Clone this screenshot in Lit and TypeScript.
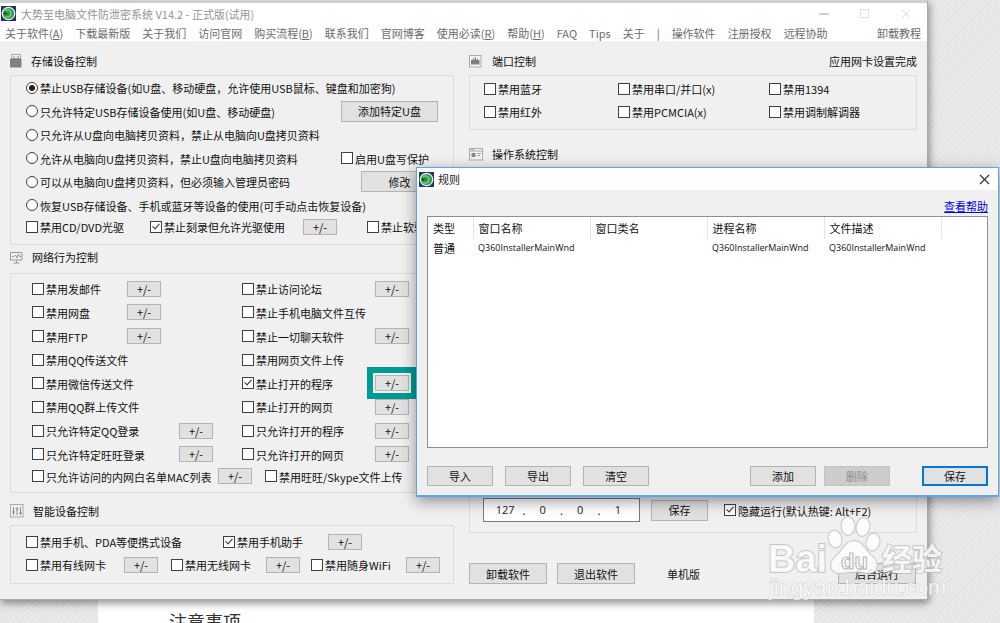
import { LitElement, html, css, svg, nothing } from "lit";
import { customElement, property } from "lit/decorators.js";

const controls = css`
  button {
    font: inherit;
    color: #111;
    background: #e1e1e1;
    border: 1px solid #b4b4b4;
    border-radius: 0;
    padding: 0;
    height: 21px;
    line-height: 16px;
    white-space: nowrap;
  }
  a {
    color: inherit;
    text-decoration: none;
  }
`;

@customElement("option-box")
class OptionBox extends LitElement {
  @property() label = "";
  @property() kind = "checkbox";
  @property() group = "";
  @property({ type: Boolean }) checked = false;

  static styles = css`
    :host {
      display: block;
      min-width: 0;
    }
    label {
      display: flex;
      align-items: center;
      gap: 2px;
      white-space: nowrap;
    }
    .mark {
      appearance: none;
      flex: none;
      box-sizing: border-box;
      position: relative;
      width: 12px;
      height: 12px;
      margin: 0;
      border: 1px solid #404040;
      background: #fff;
    }
    .mark[type="radio"] {
      border-radius: 50%;
    }
    .mark[type="radio"]:checked::after {
      content: "";
      position: absolute;
      inset: 2px;
      border-radius: 50%;
      background: #222;
    }
    .mark[type="checkbox"]:checked::after {
      content: "";
      position: absolute;
      left: 3px;
      top: 0;
      width: 3px;
      height: 6px;
      border: solid #333;
      border-width: 0 1px 1px 0;
      transform: rotate(42deg);
    }
    .text {
      padding-top: 1px;
    }
  `;

  render() {
    return html`<label>
      <input class="mark" type=${this.kind} name=${this.group || nothing} .checked=${this.checked} />
      <span class="text">${this.label}</span>
    </label>`;
  }
}

const logo = svg`
  <rect width="15" height="15" fill="#26346f"/>
  <circle cx="7.5" cy="7.5" r="6.2" fill="#2f9a4b" stroke="#e8f2ee" stroke-width="1.3"/>
  <path d="M4 4.500c3-1.500 6 0 6 3s-3 4.500-6 3" fill="none" stroke="#8fdc7c" stroke-width="1.200"/>
  <path d="M3 6.200l4 1.300-4 1.500z" fill="#173d3a"/>`;

interface Rule {
  type: string;
  windowName: string;
  windowClass: string;
  process: string;
  description: string;
}

@customElement("rules-dialog")
class RulesDialog extends LitElement {
  rules: Rule[] = [
    {
      type: "普通",
      windowName: "Q360InstallerMainWnd",
      windowClass: "",
      process: "Q360InstallerMainWnd",
      description: "Q360InstallerMainWnd",
    },
  ];

  static styles = [
    controls,
    css`
      :host {
        display: block;
        background: #f0f0f0;
        border: 1px solid #5ea6ea;
        border-bottom-width: 2px;
        box-shadow: 0 4px 14px rgba(0, 0, 0, 0.42);
      }
      .title {
        display: flex;
        align-items: center;
        gap: 4px;
        height: 22px;
        padding: 0 8px 0 2px;
        background: #fff;
        color: #222;
      }
      .title svg {
        flex: none;
      }
      .close {
        display: flex;
        margin-left: auto;
        height: auto;
        border: 0;
        background: none;
      }
      .body {
        padding: 8px 10px 9px;
      }
      .help {
        display: block;
        width: max-content;
        margin-left: auto;
        line-height: 16px;
        color: #0000f0;
        text-decoration: underline;
      }
      .list {
        margin-top: 2px;
        height: 230px;
        border: 1px solid #8b8f99;
        background: #fff;
      }
      table {
        width: 100%;
        table-layout: fixed;
        border-collapse: collapse;
      }
      th,
      td {
        padding: 0 0 0 5px;
        text-align: left;
        font-weight: normal;
        white-space: nowrap;
      }
      th {
        height: 22px;
        border-right: 1px solid #e4e4e4;
      }
      th:last-child {
        border-right: 0;
      }
      td {
        height: 17px;
      }
      .latin {
        font-family: "Open Sans", "Noto Sans CJK SC", sans-serif;
        font-size: 9px;
      }
      .kind {
        width: 45px;
      }
      .wide {
        width: 117px;
      }
      .actions {
        display: flex;
        gap: 12px;
        margin-top: 18px;
      }
      .actions button {
        width: 66px;
        height: 20px;
      }
      .push {
        margin-left: auto;
      }
      .actions button:disabled {
        margin-left: -4px;
        color: #8c8c8c;
        background: #cccccc;
        border-color: #c3c3c3;
      }
      .actions .primary {
        margin-left: 20px;
        border: 2px solid #0078d7;
      }
    `,
  ];

  render() {
    return html`
      <header class="title">
        <svg width="15" height="15" viewBox="0 0 15 15">${logo}</svg>
        <span>规则</span>
        <button class="close" aria-label="关闭">
          <svg width="11" height="11" viewBox="0 0 11 11">
            <path d="M1 1l9 9M10 1l-9 9" stroke="#333" stroke-width="1.200" />
          </svg>
        </button>
      </header>
      <div class="body">
        <a class="help" href="#help">查看帮助</a>
        <div class="list">
          <table>
            <colgroup>
              <col class="kind" />
              <col class="wide" />
              <col class="wide" />
              <col class="wide" />
              <col class="wide" />
              <col />
            </colgroup>
            <thead>
              <tr>
                <th>类型</th>
                <th>窗口名称</th>
                <th>窗口类名</th>
                <th>进程名称</th>
                <th>文件描述</th>
                <th></th>
              </tr>
            </thead>
            <tbody>
              ${this.rules.map(
                (r) => html`<tr>
                  <td>${r.type}</td>
                  <td class="latin">${r.windowName}</td>
                  <td class="latin">${r.windowClass}</td>
                  <td class="latin">${r.process}</td>
                  <td class="latin">${r.description}</td>
                  <td></td>
                </tr>`
              )}
            </tbody>
          </table>
        </div>
        <div class="actions">
          <button>导入</button>
          <button>导出</button>
          <button>清空</button>
          <button class="push">添加</button>
          <button disabled>删除</button>
          <button class="primary">保存</button>
        </div>
      </div>
    `;
  }
}

@customElement("site-watermark")
class SiteWatermark extends LitElement {
  static styles = css`
    :host {
      display: block;
      pointer-events: none;
    }
    svg {
      display: block;
    }
    .big {
      font-family: "Liberation Sans", "Noto Sans CJK SC", sans-serif;
      font-weight: bold;
    }
    .url {
      font-family: "Liberation Sans", sans-serif;
      font-size: 22px;
    }
  `;

  render() {
    return html`<svg width="184" height="92" viewBox="0 0 184 92" aria-hidden="true">
      <g fill="#fff" fill-opacity=".8" stroke="#bcbcbc" stroke-opacity=".75" stroke-width="2" paint-order="stroke">
        <text class="big" x="2" y="57" font-size="38">Bai</text>
        <ellipse cx="69" cy="24" rx="6.500" ry="8.500" transform="rotate(-12 69 24)" />
        <ellipse cx="82" cy="11" rx="6.500" ry="9" />
        <ellipse cx="97" cy="12" rx="6.500" ry="9" transform="rotate(10 97 12)" />
        <ellipse cx="107" cy="27" rx="6.500" ry="8.500" transform="rotate(14 107 27)" />
        <path d="M88 26c7 0 10 6 14 11s9 7 9 13c0 7-6 9-11 8-5-1-8-1-12-1s-8 0-13 1c-5 1-10-2-10-8s5-8 9-13 7-11 14-11z" />
        <text class="big" x="116" y="55" font-size="30">经验</text>
      </g>
      <text class="url" x="3" y="80" fill="#fff" fill-opacity=".8" stroke="#bcbcbc" stroke-opacity=".6"
        stroke-width="1.200" paint-order="stroke">jingyan.baidu.com</text>
      <text class="big" x="75" y="54" font-size="22" fill="#fff" stroke="#bcbcbc" stroke-width="1.200">du</text>
    </svg>`;
  }
}

interface NetRow {
  left: string;
  leftRule?: "near" | "far";
  right: string;
  rightRule?: boolean;
  checked?: boolean;
  marked?: boolean;
}

@customElement("app-root")
class AppRoot extends LitElement {
  menu = [
    "关于软件(A)", "下载最新版", "关于我们", "访问官网", "购买流程(B)", "联系我们", "官网博客",
    "使用必读(R)", "帮助(H)", "FAQ", "Tips", "关于", "|", "操作软件", "注册授权", "远程协助", "卸载教程",
  ];

  network: NetRow[] = [
    { left: "禁用发邮件", leftRule: "near", right: "禁止访问论坛", rightRule: true },
    { left: "禁用网盘", leftRule: "near", right: "禁止手机电脑文件互传" },
    { left: "禁用FTP", leftRule: "near", right: "禁止一切聊天软件", rightRule: true },
    { left: "禁用QQ传送文件", right: "禁用网页文件上传" },
    { left: "禁用微信传送文件", right: "禁止打开的程序", rightRule: true, checked: true, marked: true },
    { left: "禁用QQ群上传文件", right: "禁止打开的网页", rightRule: true },
    { left: "只允许特定QQ登录", leftRule: "far", right: "只允许打开的程序", rightRule: true },
    { left: "只允许特定旺旺登录", leftRule: "far", right: "只允许打开的网页", rightRule: true },
  ];

  static styles = [
    controls,
    css`
      :host {
        display: block;
        position: relative;
        height: 100vh;
        overflow: hidden;
        font: 11px/16px "Noto Sans CJK SC", sans-serif;
        color: #111;
        background: repeating-linear-gradient(135deg, #e5e5e5 0 2px, #e9e9e9 2px 4px);
      }
      .article {
        box-sizing: border-box;
        min-height: 100%;
        margin: 0 186px 0 98px;
        padding: 608px 71px 0;
        background: #fff;
      }
      .article h2 {
        margin: 0;
        font-size: 18px;
        line-height: 26px;
        font-weight: normal;
        color: #333;
        white-space: nowrap;
      }
      .window {
        position: absolute;
        top: 0;
        left: 0;
        right: 72px;
        background: #f0f0f0;
        border-top: 3px solid #cfcfcf;
        border-right: 1px solid #a9a9a9;
        border-bottom: 1px solid #a9a9a9;
        box-shadow: 1px 3px 8px rgba(0, 0, 0, 0.45);
      }
      .title {
        display: flex;
        align-items: center;
        gap: 5px;
        height: 21px;
        padding: 0 16px 0 1px;
        background: #fff;
        color: #949494;
      }
      .caption {
        display: flex;
        gap: 31px;
        margin-left: auto;
      }
      .caption button {
        display: flex;
        height: auto;
        border: 0;
        background: none;
      }
      .menu {
        display: flex;
        gap: 12px;
        height: 17px;
        line-height: 18px;
        padding: 0 6px 0 5px;
        background: #fff;
        color: #6c6c6c;
        white-space: nowrap;
      }
      .menu a:last-child {
        margin-left: auto;
      }
      .divider {
        color: #4a7a4a;
      }
      .panes {
        display: grid;
        grid-template-columns: 444fr 448fr;
        gap: 15px;
        padding: 6px 10px 15px;
      }
      .pane {
        display: flex;
        flex-direction: column;
        min-width: 0;
      }
      .head {
        display: flex;
        align-items: center;
        box-sizing: border-box;
        gap: 9px;
        height: 28px;
      }
      .tight {
        padding-bottom: 4px;
      }
      .head svg {
        flex: none;
      }
      .head h2 {
        margin: 0;
        font: inherit;
      }
      .note {
        margin-left: auto;
      }
      .box {
        box-sizing: border-box;
        border: 1px solid #dcdcdc;
        white-space: nowrap;
      }
      .storage {
        padding: 0 15px 8px;
      }
      .modes {
        display: grid;
        grid-template-columns: 1fr 97px;
        grid-auto-rows: 1fr;
        align-items: center;
        min-height: 141px;
      }
      .full {
        grid-column: 1 / 3;
      }
      .first {
        grid-column: 1;
      }
      .edit {
        width: 77px;
        justify-self: end;
      }
      .line {
        display: grid;
        align-items: center;
      }
      .discs {
        grid-template-columns: 124px 153px 64px 1fr;
        height: 19px;
      }
      .pm {
        width: 34px;
        height: 16px;
        line-height: 12px;
      }
      .network {
        padding: 3px 21px 6px;
        margin-bottom: 4px;
      }
      .grid {
        display: grid;
        grid-template-columns: 95px 52px 63px 133px 1fr;
        grid-auto-rows: 1fr;
        align-items: center;
        min-height: 189px;
      }
      .c1 {
        grid-column: 1;
      }
      .near {
        grid-column: 2;
      }
      .far {
        grid-column: 3;
      }
      .c4 {
        grid-column: 4;
      }
      .c5 {
        grid-column: 5;
      }
      .marked {
        outline: 6px solid #009a96;
        outline-offset: 2px;
      }
      .lan {
        grid-template-columns: 186px 47px 1fr;
        height: 20px;
      }
      .smart {
        padding: 4px 13px 7px 15px;
      }
      .phones {
        grid-template-columns: 197px 105px 1fr;
        height: 23px;
      }
      .cards {
        grid-template-columns: 98px 47px 95px 45px 95px 1fr;
        height: 23px;
      }
      .ports {
        display: grid;
        grid-template-columns: 134px 151px 1fr;
        grid-auto-rows: 23px;
        align-items: center;
        padding: 1px 14px 6px;
        margin-bottom: 12px;
      }
      .system {
        flex: 1;
        display: flex;
        align-items: flex-end;
        padding: 0 13px 10px;
      }
      .server {
        display: flex;
        align-items: center;
      }
      .ip {
        display: flex;
        align-items: center;
        box-sizing: border-box;
        flex: none;
        width: 157px;
        height: 24px;
        padding: 0 4px;
        border: 1px solid #7a7a7a;
        background: #fff;
      }
      .ip input {
        flex: 1;
        width: 0;
        min-width: 0;
        padding: 0 0 2px;
        border: 0;
        background: none;
        font: 11px "Open Sans", sans-serif;
        text-align: center;
        color: #222;
      }
      .save {
        width: 57px;
        margin: 0 16px 0 11px;
      }
      .footer {
        display: flex;
        align-items: center;
        margin-top: 30px;
      }
      .footer button {
        width: 78px;
        margin-right: 10px;
      }
      .edition {
        margin-left: 22px;
      }
      .footer .background {
        margin: 0 1px 0 auto;
      }
      .rules {
        position: absolute;
        top: 167px;
        left: 416px;
        right: 1px;
      }
      .watermark {
        position: absolute;
        top: 515px;
        right: 50px;
      }
    `,
  ];

  rule(extra = "") {
    return html`<button class="pm ${extra}">+/-</button>`;
  }

  menuItem(text: string) {
    if (text === "|") return html`<span class="divider">|</span>`;
    const key = text.match(/^(.*)\((\w)\)$/);
    return html`<a href="#menu">${key ? html`${key[1]}(<u>${key[2]}</u>)` : text}</a>`;
  }

  render() {
    return html`
      <article class="article"><h2>注意事项</h2></article>

      <main class="window">
        <header class="title">
          <svg width="15" height="15" viewBox="0 0 15 15">${logo}</svg>
          <span>大势至电脑文件防泄密系统 V14.2 - 正式版(试用)</span>
          <div class="caption">
            <button aria-label="最小化">
              <svg width="10" height="10" viewBox="0 0 10 10"><path d="M0 5h10" stroke="#999" /></svg>
            </button>
            <button aria-label="最大化">
              <svg width="10" height="10" viewBox="0 0 10 10">
                <rect x=".5" y=".5" width="8" height="8" fill="none" stroke="#dedede" />
              </svg>
            </button>
            <button aria-label="关闭">
              <svg width="10" height="10" viewBox="0 0 10 10"><path d="M.5.5l9 9M9.500.5l-9 9" stroke="#dedede" /></svg>
            </button>
          </div>
        </header>
        <nav class="menu">${this.menu.map((m) => this.menuItem(m))}</nav>

        <div class="panes">
          <div class="pane">
            <div class="head">
              <svg width="12" height="14" viewBox="0 0 12 14">
                <path d="M1.500.5h9v4h-9z" fill="#f6f6f6" stroke="#aaa" />
                <path d="M3 2h2v1.500H3zM7 2h2v1.500H7z" fill="#aaa" />
                <rect y="4.500" width="11.500" height="9" rx="1" fill="#808080" />
              </svg>
              <h2>存储设备控制</h2>
            </div>
            <section class="box storage">
              <div class="modes">
                <option-box class="full" kind="radio" group="usb" checked
                  label="禁止USB存储设备(如U盘、移动硬盘，允许使用USB鼠标、键盘和加密狗)"></option-box>
                <option-box class="first" kind="radio" group="usb" label="只允许特定USB存储设备使用(如U盘、移动硬盘)"></option-box>
                <button>添加特定U盘</button>
                <option-box class="full" kind="radio" group="usb" label="只允许从U盘向电脑拷贝资料，禁止从电脑向U盘拷贝资料"></option-box>
                <option-box class="first" kind="radio" group="usb" label="允许从电脑向U盘拷贝资料，禁止U盘向电脑拷贝资料"></option-box>
                <option-box label="启用U盘写保护"></option-box>
                <option-box class="first" kind="radio" group="usb" label="可以从电脑向U盘拷贝资料，但必须输入管理员密码"></option-box>
                <button class="edit">修改</button>
                <option-box class="full" kind="radio" group="usb" label="恢复USB存储设备、手机或蓝牙等设备的使用(可手动点击恢复设备)"></option-box>
              </div>
              <div class="line discs">
                <option-box label="禁用CD/DVD光驱"></option-box>
                <option-box label="禁止刻录但允许光驱使用" checked></option-box>
                ${this.rule()}
                <option-box label="禁止软驱"></option-box>
              </div>
            </section>

            <div class="head tight">
              <svg width="13" height="13" viewBox="0 0 13 13" fill="none" stroke="#999">
                <path d="M.5 1.500h11.500v7.500H.5zM6.500 9v3M3.500 12h6" />
                <path d="M2 5.500h2l1.500-1.500 1.500 3 1.500-4 1 2.500h1.500" />
              </svg>
              <h2>网络行为控制</h2>
            </div>
            <section class="box network">
              <div class="grid">
                ${this.network.map(
                  (n) => html`
                    <option-box class="c1" label=${n.left}></option-box>
                    ${n.leftRule ? this.rule(n.leftRule) : nothing}
                    <option-box class="c4" label=${n.right} ?checked=${n.checked}></option-box>
                    ${n.rightRule ? this.rule(n.marked ? "c5 marked" : "c5") : nothing}
                  `
                )}
              </div>
              <div class="line lan">
                <option-box label="只允许访问的内网白名单MAC列表"></option-box>
                ${this.rule()}
                <option-box label="禁用旺旺/Skype文件上传"></option-box>
              </div>
            </section>

            <div class="head">
              <svg width="14" height="14" viewBox="0 0 14 14" fill="none" stroke="#8c8c8c">
                <rect x=".5" y=".5" width="12.500" height="12.500" stroke="#aaa" />
                <path d="M3.500 3v8M7 3v8M10.500 3v8M2 8h3M5.500 5h3M9 9h3" />
              </svg>
              <h2>智能设备控制</h2>
            </div>
            <section class="box smart">
              <div class="line phones">
                <option-box label="禁用手机、PDA等便携式设备"></option-box>
                <option-box label="禁用手机助手" checked></option-box>
                ${this.rule()}
              </div>
              <div class="line cards">
                <option-box label="禁用有线网卡"></option-box>
                ${this.rule()}
                <option-box label="禁用无线网卡"></option-box>
                ${this.rule()}
                <option-box label="禁用随身WiFi"></option-box>
                ${this.rule()}
              </div>
            </section>
          </div>

          <div class="pane">
            <div class="head">
              <svg width="14" height="13" viewBox="0 0 14 13">
                <rect x=".5" y=".5" width="11.500" height="11.500" fill="#f4f4f4" stroke="#aaa" />
                <path d="M2 9.500V5h1.500V3.500h1V5h1V2.500h1.500V5h1V3.500h1V5h1.500v4.500z" fill="#808080" />
              </svg>
              <h2>端口控制</h2>
              <span class="note">应用网卡设置完成</span>
            </div>
            <section class="box ports">
              <option-box label="禁用蓝牙"></option-box>
              <option-box label="禁用串口/并口(x)"></option-box>
              <option-box label="禁用1394"></option-box>
              <option-box label="禁用红外"></option-box>
              <option-box label="禁用PCMCIA(x)"></option-box>
              <option-box label="禁用调制解调器"></option-box>
            </section>

            <div class="head tight">
              <svg width="14" height="13" viewBox="0 0 14 13">
                <rect x=".5" y=".5" width="13" height="11.500" fill="#f4f4f4" stroke="#aaa" />
                <path d="M1 3h12" stroke="#aaa" />
                <rect x="2.500" y="5" width="4" height="4" fill="#888" />
                <path d="M8.500 5.500h3.500M8.500 7.500h2.500M2 1.800h3" stroke="#999" />
              </svg>
              <h2>操作系统控制</h2>
            </div>
            <section class="box system">
              <div class="server">
                <div class="ip" role="group" aria-label="IP">
                  <input aria-label="IP 1" value="127" />.<input aria-label="IP 2" value="0" />.<input
                    aria-label="IP 3"
                    value="0"
                  />.<input aria-label="IP 4" value="1" />
                </div>
                <button class="save">保存</button>
                <option-box label="隐藏运行(默认热键: Alt+F2)" checked></option-box>
              </div>
            </section>
            <div class="footer">
              <button>卸载软件</button>
              <button>退出软件</button>
              <span class="edition">单机版</span>
              <button class="background">后台运行</button>
            </div>
          </div>
        </div>
      </main>

      <rules-dialog class="rules"></rules-dialog>
      <site-watermark class="watermark"></site-watermark>
    `;
  }
}
